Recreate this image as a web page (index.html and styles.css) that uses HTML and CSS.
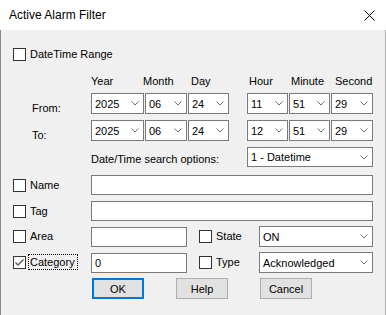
FILE: index.html
```html
<!DOCTYPE html>
<html lang="en">
  <head>
    <meta charset="UTF-8" />
    <title>Active Alarm Filter</title>
    <link rel="stylesheet" href="styles.css">
  </head>

  <body>
    <div class="dialog">
      <!-- Title bar -->
      <div class="titlebar">
        <span class="title">Active Alarm Filter</span>
        <svg class="close" width="11" height="11" viewBox="0 0 11 11">
          <path d="M0.5 0.5 L10.5 10.5 M10.5 0.5 L0.5 10.5" stroke="#000" stroke-width="1" fill="none" />
        </svg>
      </div>

      <div class="content">
        <div class="row range-row">
          <span class="check"></span>
          <span class="check-label">DateTime Range</span>
        </div>

        <div class="row header-row">
          <span class="hdr hdr-year">Year</span>
          <span class="hdr hdr-month">Month</span>
          <span class="hdr hdr-day">Day</span>
          <span class="hdr hdr-hour">Hour</span>
          <span class="hdr hdr-minute">Minute</span>
          <span class="hdr">Second</span>
        </div>

        <div class="row date-row">
          <span class="row-label">From:</span>
          <div class="combo w-year"><span>2025</span><svg width="8" height="5" viewBox="0 0 8 5"><path d="M0.5 0.5 L4 4 L7.5 0.5" /></svg></div>
          <div class="combo w-month"><span>06</span><svg width="8" height="5" viewBox="0 0 8 5"><path d="M0.5 0.5 L4 4 L7.5 0.5" /></svg></div>
          <div class="combo w-day"><span>24</span><svg width="8" height="5" viewBox="0 0 8 5"><path d="M0.5 0.5 L4 4 L7.5 0.5" /></svg></div>
          <div class="combo w-hour"><span>11</span><svg width="8" height="5" viewBox="0 0 8 5"><path d="M0.5 0.5 L4 4 L7.5 0.5" /></svg></div>
          <div class="combo w-minute"><span>51</span><svg width="8" height="5" viewBox="0 0 8 5"><path d="M0.5 0.5 L4 4 L7.5 0.5" /></svg></div>
          <div class="combo w-second"><span>29</span><svg width="8" height="5" viewBox="0 0 8 5"><path d="M0.5 0.5 L4 4 L7.5 0.5" /></svg></div>
        </div>

        <div class="row date-row to-row">
          <span class="row-label">To:</span>
          <div class="combo w-year"><span>2025</span><svg width="8" height="5" viewBox="0 0 8 5"><path d="M0.5 0.5 L4 4 L7.5 0.5" /></svg></div>
          <div class="combo w-month"><span>06</span><svg width="8" height="5" viewBox="0 0 8 5"><path d="M0.5 0.5 L4 4 L7.5 0.5" /></svg></div>
          <div class="combo w-day"><span>24</span><svg width="8" height="5" viewBox="0 0 8 5"><path d="M0.5 0.5 L4 4 L7.5 0.5" /></svg></div>
          <div class="combo w-hour"><span>12</span><svg width="8" height="5" viewBox="0 0 8 5"><path d="M0.5 0.5 L4 4 L7.5 0.5" /></svg></div>
          <div class="combo w-minute"><span>51</span><svg width="8" height="5" viewBox="0 0 8 5"><path d="M0.5 0.5 L4 4 L7.5 0.5" /></svg></div>
          <div class="combo w-second"><span>29</span><svg width="8" height="5" viewBox="0 0 8 5"><path d="M0.5 0.5 L4 4 L7.5 0.5" /></svg></div>
        </div>

        <div class="row options-row">
          <span class="options-label">Date/Time search options:</span>
          <div class="combo w-options"><span>1 - Datetime</span><svg width="8" height="5" viewBox="0 0 8 5"><path d="M0.5 0.5 L4 4 L7.5 0.5" /></svg></div>
        </div>

        <div class="row field-row name-row">
          <span class="check"></span>
          <span class="check-label field-label">Name</span>
          <input class="edit w-full" type="text" value="" />
        </div>

        <div class="row field-row tag-row">
          <span class="check"></span>
          <span class="check-label field-label">Tag</span>
          <input class="edit w-full" type="text" value="" />
        </div>

        <div class="row field-row area-row">
          <span class="check"></span>
          <span class="check-label field-label">Area</span>
          <input class="edit w-short" type="text" value="" />
          <span class="check sub-check"></span>
          <span class="check-label sub-label">State</span>
          <div class="combo w-sub"><span>ON</span><svg width="8" height="5" viewBox="0 0 8 5"><path d="M0.5 0.5 L4 4 L7.5 0.5" /></svg></div>
        </div>

        <div class="row field-row category-row">
          <span class="check checked">
            <svg width="11" height="11" viewBox="0 0 11 11"><path d="M1.5 5.5 L4 8 L9.5 2.5" /></svg>
          </span>
          <span class="check-label field-label"><span class="focus">Category</span></span>
          <input class="edit w-short" type="text" value="0" />
          <span class="check sub-check"></span>
          <span class="check-label sub-label">Type</span>
          <div class="combo w-sub"><span>Acknowledged</span><svg width="8" height="5" viewBox="0 0 8 5"><path d="M0.5 0.5 L4 4 L7.5 0.5" /></svg></div>
        </div>

        <div class="row button-row">
          <button class="default">OK</button>
          <button>Help</button>
          <button>Cancel</button>
        </div>
      </div>
    </div>
  </body>
</html>
```

FILE: styles.css
```css
:root {
  --face: #f0f0f0;
  --edge: #7a7a7a;
  --text: #000;
  --btn-bg: #e1e1e1;
  --btn-border: #adadad;
  --accent: #0078d7;
}

* {
  box-sizing: border-box;
  margin: 0;
  padding: 0;
}

body {
  width: 386px;
  height: 315px;
  overflow: hidden;
  font-family: "Liberation Sans", Arial, sans-serif;
  font-size: 11px;
  color: var(--text);
  background: var(--face);
}

.dialog {
  width: 386px;
  height: 315px;
  display: flex;
  flex-direction: column;
}

/* Title bar */
.titlebar {
  height: 30px;
  background: #fff;
  display: flex;
  align-items: center;
  justify-content: space-between;
  padding: 0 11px 0 9px;
}

.title {
  font-size: 12px;
}

.close {
  display: block;
}

/* Dialog face */
.content {
  flex: 1;
  background: var(--face);
  border-left: 1px solid #8a8a8a;
  border-right: 1px solid #b0b0b0;
  padding-left: 12px;
}

.row {
  display: flex;
  align-items: center;
}

/* Checkboxes */
.check {
  width: 13px;
  height: 13px;
  flex: none;
  border: 1px solid #333;
  background: #fff;
  display: flex;
  align-items: center;
  justify-content: center;
}

.check.checked svg path {
  fill: none;
  stroke: #555;
  stroke-width: 1.3;
}

.check-label {
  margin-left: 4px;
  line-height: 13px;
}

.field-label {
  width: 61px;
}

.focus {
  outline: 1px dotted #000;
  outline-offset: 1px;
  padding: 0 1px 0 0;
}

.range-row {
  height: 13px;
  margin-top: 18px;
}

/* Column headers */
.header-row {
  height: 14px;
  margin-top: 13px;
  padding-left: 78px;
}

.hdr-year { width: 52px; }
.hdr-month { width: 48px; }
.hdr-day { width: 58px; }
.hdr-hour { width: 42px; }
.hdr-minute { width: 44px; }

/* Date rows */
.date-row {
  height: 21px;
  margin-top: 5px;
  gap: 1px;
}

.to-row {
  margin-top: 6px;
}

.row-label {
  width: 78px;
  padding-left: 19px;
  padding-top: 8px;
  margin-right: -1px;
}

.combo {
  height: 21px;
  flex: none;
  border: 1px solid var(--edge);
  background: #fff;
  display: flex;
  align-items: center;
  justify-content: space-between;
  padding: 0 4px 0 3px;
}

.combo svg path {
  fill: none;
  stroke: #707070;
  stroke-width: 1;
}

.w-year { width: 53px; }
.w-month { width: 42px; }
.w-day { width: 41px; }
.w-hour { width: 41px; margin-left: 17px; }
.w-minute { width: 41px; }
.w-second { width: 42px; }

.options-row {
  height: 20px;
  margin-top: 6px;
  padding-left: 78px;
}

.options-label {
  width: 156px;
  padding-top: 4px;
}

.w-options {
  width: 126px;
  height: 20px;
}

/* Filter fields */
.field-row {
  height: 20px;
}

.name-row {
  margin-top: 8px;
}

.tag-row {
  margin-top: 6px;
}

.area-row,
.category-row {
  height: 21px;
  margin-top: 5px;
}

.edit {
  height: 20px;
  flex: none;
  border: 1px solid var(--edge);
  background: #fff;
  font-family: inherit;
  font-size: 11px;
  color: var(--text);
  padding: 0 3px;
  outline: none;
}

.w-full { width: 282px; }
.w-short { width: 96px; }

.sub-check {
  margin-left: 12px;
}

.sub-label {
  width: 43px;
}

.w-sub {
  width: 114px;
}

/* Buttons */
.button-row {
  height: 21px;
  margin-top: 5px;
  padding-left: 79px;
  gap: 32px;
}

button {
  width: 52px;
  height: 21px;
  background: var(--btn-bg);
  border: 1px solid var(--btn-border);
  font-family: inherit;
  font-size: 11px;
  color: var(--text);
}

button.default {
  border: 2px solid var(--accent);
}
```
